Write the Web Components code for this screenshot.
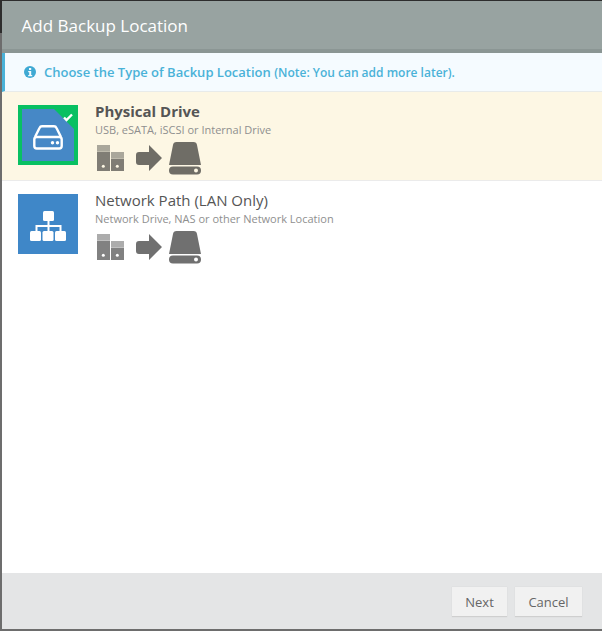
<!DOCTYPE html>
<html><head><meta charset="utf-8">
<style>
html,body{margin:0;padding:0;height:100%;overflow:hidden;background:linear-gradient(#2d2d2d 33px,#6d6d6d 33px)}
body{font-family:"Open Sans",sans-serif}
</style></head><body>
<template id="flow-t"><style>
:host{display:block;width:108px;height:34px}
svg{display:block}
</style>
<svg width="108" height="34" viewBox="0 0 108 34"><g fill="currentColor">
<g opacity=".88"><path d="M2 9.500h13V29H2z"/><path d="M16 16.500h13V29H16z"/></g>
<rect x="2" y="3" width="13" height="6" opacity=".58"/><rect x="16" y="10" width="13" height="6" opacity=".58"/>
<path d="M41 13a3 3 0 0 1 3-3h10V3l13 13-13 13v-6H44a3 3 0 0 1-3-3z"/>
<path d="M78 3q.4-3 3.500-3h17q3.100 0 3.500 3l4 20H74z"/>
<rect x="74" y="24.500" width="32" height="8" rx="4"/></g>
<g fill="var(--dot)"><circle cx="8.300" cy="24.300" r="1.500"/><circle cx="22.300" cy="24.300" r="1.500"/><circle cx="101" cy="28.500" r="2"/></g>
</svg></template>

<template id="item-t"><style>
:host{display:flex;box-sizing:border-box;height:89px;padding:13px 0 0 16px;gap:17px;--dot:#fff}
:host([selected]){background:#fdf7e4;--dot:#fdf7e4;border-bottom:1px solid #ebebeb}
.tile{width:60px;height:60px;flex:none;position:relative;background:#3f87c8;display:flex;align-items:center;justify-content:center;box-sizing:border-box;color:#fff;padding-top:4px}
:host([selected]) .tile{box-shadow:inset 0 0 0 4px #08c062;background:#4688c6}
.corner{display:none;position:absolute;right:4px;top:4px}
:host([selected]) .corner{display:block}
.text{color:#555;display:flex;flex-direction:column;align-items:flex-start;margin-top:-4px}
.title{font-size:15px;line-height:20px;height:20px}
:host([selected]) .title{font-weight:700}
.sub{font-size:11px;line-height:14px;color:#8f8f8f;margin-top:2px}
.flow{margin-top:5px;margin-left:0;color:#707070}
:host([selected]) .flow{color:#6f6d66}
</style><div class="tile"><slot name="icon"></slot>
<svg class="corner" width="20" height="20" viewBox="0 0 20 20"><path d="M0 0h20v20z" fill="#08c062"/><path d="M10 8.500l2.500 2.500 5.500-5.500" fill="none" stroke="#fff" stroke-width="2.400"/></svg></div>
<div class="text"><div class="title"><slot name="title"></slot></div><div class="sub"><slot name="sub"></slot></div><flow-graphic class="flow"></flow-graphic></div></template>

<template id="dlg-t"><style>
:host{display:flex;flex-direction:column;height:628px;margin-left:2px;padding-top:1px;background:#fff;color:#555;position:relative;background-clip:content-box}
header{box-sizing:border-box;height:52px;background:#98a3a1;border-bottom:4px solid #8b9694;color:#fff;font-size:17px;line-height:50px;padding-left:19.600px}
main{flex:1;min-height:0}
footer{height:56px;box-sizing:border-box;background:#e4e5e6;display:flex;justify-content:flex-end;align-items:flex-start;padding:14px 20px 0 0;gap:8px}
</style><header><slot name="heading"></slot></header><main><slot></slot></main><footer><slot name="actions"></slot></footer></template>

<template id="notice-t"><style>
:host{display:flex;align-items:center;box-sizing:border-box;height:39px;background:#f5fbff;border-left:3px solid #4ab2d8;border-bottom:1px solid #e8ebea;color:#4ab2d8;font-size:13px;padding-left:19px;gap:8px}
b{font-weight:600}
span{font-size:12px;font-weight:600}
</style>
<svg width="12" height="12" viewBox="0 0 12 12"><circle cx="6" cy="6" r="6" fill="#3fa9d3"/><rect x="5" y="2" width="2.200" height="2" fill="#f5fbff"/><path d="M4.200 5h3v4h1v1.200h-4V9h1V6.200h-1z" fill="#f5fbff"/></svg>
<div><b><slot></slot></b> <span><slot name="note"></slot></span></div></template>

<template id="btn-t"><style>
:host{display:flex;align-items:center;justify-content:center;box-sizing:border-box;height:30px;background:#f1f1f1;border-bottom:1px solid #cfcfcf;box-shadow:0 0 1px #ccc;font-size:13px;color:#666}
</style><slot></slot></template>

<add-dialog>
<span slot="heading">Add Backup Location</span>
<info-notice>Choose the Type of Backup Location<span slot="note">(Note: You can add more later).</span></info-notice>
<location-item selected>
<svg slot="icon" width="30" height="25" viewBox="0 0 30 25" fill="none" stroke="#fff" stroke-width="2.400"><path d="M2 12L6.500 3Q7.300 1.300 9 1.300h12q1.700 0 2.500 1.700L28 12"/><rect x="1.300" y="12" width="27.400" height="11.500" rx="2.500"/><circle cx="19.500" cy="17.700" r="1.700" fill="#fff" stroke="none"/><circle cx="24.500" cy="17.700" r="1.700" fill="#fff" stroke="none"/></svg>
<span slot="title">Physical Drive</span><span slot="sub">USB, eSATA, iSCSI or Internal Drive</span>
</location-item>
<location-item>
<svg slot="icon" width="36" height="30" viewBox="0 0 36 30" fill="#fff"><rect x="13" y="0" width="11" height="10" rx="1.500"/><rect x="0" y="20" width="11" height="10" rx="1.500"/><rect x="12.500" y="20" width="11" height="10" rx="1.500"/><rect x="25" y="20" width="11" height="10" rx="1.500"/><path d="M17.500 9h2v5h12v7h-2v-5h-10v5h-2v-5h-10v5h-2v-7h12z"/></svg>
<span slot="title">Network Path (LAN Only)</span><span slot="sub">Network Drive, NAS or other Network Location</span>
</location-item>
<action-btn slot="actions" style="width:55px">Next</action-btn>
<action-btn slot="actions" style="width:67px">Cancel</action-btn>
</add-dialog>

<script>
function reg(tag,id){customElements.define(tag,class extends HTMLElement{constructor(){super();this.attachShadow({mode:'open'}).appendChild(document.getElementById(id).content.cloneNode(true));}});}
reg('flow-graphic','flow-t');reg('location-item','item-t');reg('add-dialog','dlg-t');reg('info-notice','notice-t');reg('action-btn','btn-t');
</script>
</body></html>
